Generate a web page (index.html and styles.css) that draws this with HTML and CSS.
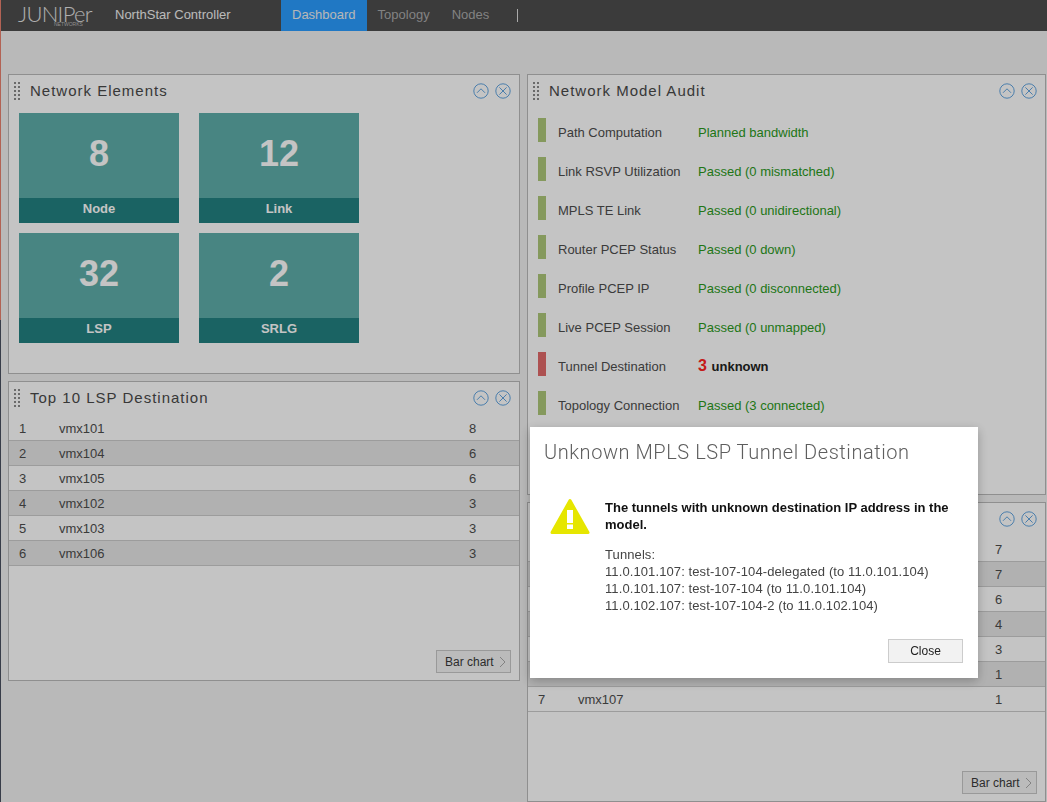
FILE: index.html
```html
<!DOCTYPE html>
<html lang="en">
<head>
  <meta charset="UTF-8">
  <meta name="viewport" content="width=device-width, initial-scale=1.0">
  <title>NorthStar Controller</title>
  <link rel="stylesheet" href="styles.css">
</head>
<body>
  <div class="topbar">
    <div class="logo">
      <span class="logo-word">JUNIPer</span>
      <span class="logo-sub">NETWORKS</span>
    </div>
    <div class="product">NorthStar Controller</div>
    <a class="tab active">Dashboard</a>
    <a class="tab">Topology</a>
    <a class="tab">Nodes</a>
    <span class="tab-sep"></span>
  </div>

  <div class="dashboard">
    <div class="column">
      <section class="panel panel-short">
        <div class="panel-head">
          <span class="grip"></span>
          <h3>Network Elements</h3>
          <svg class="head-icon" viewBox="0 0 16 16"><circle cx="8" cy="8" r="7.2"/><path d="M4 9.8 8 5.8 12 9.8"/></svg>
          <svg class="head-icon" viewBox="0 0 16 16"><circle cx="8" cy="8" r="7.2"/><path d="M4.4 4.4 11.6 11.6M11.6 4.4 4.4 11.6"/></svg>
        </div>
        <div class="tiles">
          <div class="tile"><div class="tile-num">8</div><div class="tile-label">Node</div></div>
          <div class="tile"><div class="tile-num">12</div><div class="tile-label">Link</div></div>
          <div class="tile"><div class="tile-num">32</div><div class="tile-label">LSP</div></div>
          <div class="tile"><div class="tile-num">2</div><div class="tile-label">SRLG</div></div>
        </div>
      </section>

      <section class="panel panel-short">
        <div class="panel-head">
          <span class="grip"></span>
          <h3>Top 10 LSP Destination</h3>
          <svg class="head-icon" viewBox="0 0 16 16"><circle cx="8" cy="8" r="7.2"/><path d="M4 9.8 8 5.8 12 9.8"/></svg>
          <svg class="head-icon" viewBox="0 0 16 16"><circle cx="8" cy="8" r="7.2"/><path d="M4.4 4.4 11.6 11.6M11.6 4.4 4.4 11.6"/></svg>
        </div>
        <div class="rows">
          <div class="row"><span>1</span><span>vmx101</span><span>8</span></div>
          <div class="row shade"><span>2</span><span>vmx104</span><span>6</span></div>
          <div class="row"><span>3</span><span>vmx105</span><span>6</span></div>
          <div class="row shade"><span>4</span><span>vmx102</span><span>3</span></div>
          <div class="row"><span>5</span><span>vmx103</span><span>3</span></div>
          <div class="row shade"><span>6</span><span>vmx106</span><span>3</span></div>
        </div>
        <div class="panel-foot">
          <button class="chart-btn">Bar chart <svg viewBox="0 0 7 12"><path d="M1 1 6 6 1 11"/></svg></button>
        </div>
      </section>
    </div>

    <div class="column">
      <section class="panel panel-audit">
        <div class="panel-head">
          <span class="grip"></span>
          <h3>Network Model Audit</h3>
          <svg class="head-icon" viewBox="0 0 16 16"><circle cx="8" cy="8" r="7.2"/><path d="M4 9.8 8 5.8 12 9.8"/></svg>
          <svg class="head-icon" viewBox="0 0 16 16"><circle cx="8" cy="8" r="7.2"/><path d="M4.4 4.4 11.6 11.6M11.6 4.4 4.4 11.6"/></svg>
        </div>
        <div class="audit">
          <div class="audit-row"><i class="flag"></i><span class="audit-name">Path Computation</span><span class="ok">Planned bandwidth</span></div>
          <div class="audit-row"><i class="flag"></i><span class="audit-name">Link RSVP Utilization</span><span class="ok">Passed (0 mismatched)</span></div>
          <div class="audit-row"><i class="flag"></i><span class="audit-name">MPLS TE Link</span><span class="ok">Passed (0 unidirectional)</span></div>
          <div class="audit-row"><i class="flag"></i><span class="audit-name">Router PCEP Status</span><span class="ok">Passed (0 down)</span></div>
          <div class="audit-row"><i class="flag"></i><span class="audit-name">Profile PCEP IP</span><span class="ok">Passed (0 disconnected)</span></div>
          <div class="audit-row"><i class="flag"></i><span class="audit-name">Live PCEP Session</span><span class="ok">Passed (0 unmapped)</span></div>
          <div class="audit-row"><i class="flag bad"></i><span class="audit-name">Tunnel Destination</span><span class="fail"><b>3</b> unknown</span></div>
          <div class="audit-row"><i class="flag"></i><span class="audit-name">Topology Connection</span><span class="ok">Passed (3 connected)</span></div>
        </div>
      </section>

      <section class="panel panel-source">
        <div class="panel-head">
          <span class="grip"></span>
          <h3></h3>
          <svg class="head-icon" viewBox="0 0 16 16"><circle cx="8" cy="8" r="7.2"/><path d="M4 9.8 8 5.8 12 9.8"/></svg>
          <svg class="head-icon" viewBox="0 0 16 16"><circle cx="8" cy="8" r="7.2"/><path d="M4.4 4.4 11.6 11.6M11.6 4.4 4.4 11.6"/></svg>
        </div>
        <!-- first six names sit behind the dialog -->
        <div class="rows">
          <div class="row"><span></span><span></span><span>7</span></div>
          <div class="row shade"><span></span><span></span><span>7</span></div>
          <div class="row"><span></span><span></span><span>6</span></div>
          <div class="row shade"><span></span><span></span><span>4</span></div>
          <div class="row"><span></span><span></span><span>3</span></div>
          <div class="row shade"><span></span><span></span><span>1</span></div>
          <div class="row"><span>7</span><span>vmx107</span><span>1</span></div>
        </div>
        <div class="panel-foot">
          <button class="chart-btn">Bar chart <svg viewBox="0 0 7 12"><path d="M1 1 6 6 1 11"/></svg></button>
        </div>
      </section>
    </div>
  </div>

  <div class="overlay"></div>

  <div class="modal">
    <h2>Unknown MPLS LSP Tunnel Destination</h2>
    <div class="modal-body">
      <svg class="warn" viewBox="0 0 40 37">
        <path class="warn-bg" d="M20 2.5 38 34.5H2Z"/>
        <rect class="warn-mark" x="17" y="12" width="6" height="13"/>
        <rect class="warn-mark" x="17" y="26.5" width="6" height="4.5"/>
      </svg>
      <div class="modal-text">
        <p class="modal-lead">The tunnels with unknown destination IP address in the model.</p>
        <p class="modal-list">Tunnels:<br>
        11.0.101.107: test-107-104-delegated (to 11.0.101.104)<br>
        11.0.101.107: test-107-104 (to 11.0.101.104)<br>
        11.0.102.107: test-107-104-2 (to 11.0.102.104)</p>
      </div>
    </div>
    <div class="modal-foot">
      <button class="close-btn">Close</button>
    </div>
  </div>
</body>
</html>
```

FILE: styles.css
```css
html, body {
  height: 100%;
}
body {
  margin: 0;
  padding-left: 1px;
  box-sizing: border-box;
  overflow: hidden;
  font-family: "Liberation Sans", Arial, sans-serif;
  font-size: 13px;
  color: #4d4d4d;
  background: linear-gradient(#e8806e 0, #e8806e 320px, #4a5060 320px) 0 0 / 1px 100% no-repeat, #f1f1f1;
}

/* top bar */
.topbar {
  display: flex;
  align-items: center;
  height: 31px;
  background-color: #4d4d4d;
  color: #fff;
}
.logo {
  position: relative;
  width: 114px;
  height: 31px;
  flex: none;
}
.logo-word {
  position: absolute;
  left: 17px;
  top: 5px;
  font-family: "Lato", sans-serif;
  font-weight: 300;
  font-size: 22px;
  line-height: 17px;
  letter-spacing: -0.7px;
  color: #e4e4e4;
}
.logo-sub {
  position: absolute;
  left: 53px;
  top: 22px;
  font-size: 5px;
  line-height: 5px;
  color: #bbb;
}
.product {
  width: 166px;
  flex: none;
  padding-bottom: 2px;
  font-size: 13px;
  color: #f2f2f2;
}
.tab {
  height: 31px;
  padding: 0 11px;
  line-height: 29px;
  font-size: 13px;
  color: #aaa;
}
.tab.active {
  background-color: #2a9dff;
  color: #eee;
}
.tab-sep {
  width: 1px;
  height: 13px;
  margin-left: 17px;
  background-color: #ddd;
}

/* panels */
.dashboard {
  display: grid;
  grid-template-columns: 512px 519px;
  gap: 7px;
  padding: 43px 0 0 7px;
}
.column {
  display: flex;
  flex-direction: column;
  gap: 7px;
}
.panel {
  display: flex;
  flex-direction: column;
  box-sizing: border-box;
  border: 1px solid #bababa;
  background-color: #fff;
}
.panel-short {
  height: 300px;
}
.panel-audit {
  height: 421px;
}
.panel-source {
  height: 300px;
}
.panel-head {
  display: flex;
  align-items: center;
  gap: 6px;
  height: 31px;
  flex: none;
  padding: 0 8px 0 5px;
}
.panel-head h3 {
  flex: 1;
  margin: 0 0 0 4px;
  font-size: 15px;
  font-weight: normal;
  letter-spacing: 1px;
  color: #4a4a4a;
}
.grip {
  width: 2px;
  height: 18px;
  border-left: 2px dotted #8a8a8a;
  border-right: 2px dotted #8a8a8a;
}
.head-icon {
  width: 16px;
  height: 16px;
  fill: none;
  stroke: #62a5e0;
  stroke-width: 1;
}

/* tiles */
.tiles {
  display: grid;
  grid-template-columns: 160px 160px;
  gap: 10px 20px;
  padding: 7px 10px;
}
.tile {
  display: flex;
  flex-direction: column;
  height: 110px;
  background-color: #5eaea9;
  color: #fff;
  text-align: center;
  font-weight: bold;
}
.tile-num {
  flex: 1;
  font-size: 36px;
  line-height: 81px;
}
.tile-label {
  height: 25px;
  line-height: 21px;
  background-color: #238181;
  font-size: 13px;
}

/* tables */
.rows {
  flex: none;
  margin-top: 3px;
}
.row {
  display: grid;
  grid-template-columns: 40px 1fr 50px;
  height: 25px;
  box-sizing: border-box;
  padding-left: 10px;
  border-bottom: 1px solid #cbcbcb;
  line-height: 26px;
}
.shade {
  background-color: #e7e7e7;
}
.panel-foot {
  display: flex;
  justify-content: flex-end;
  margin-top: auto;
  padding: 0 8px 7px;
}
.chart-btn {
  display: flex;
  align-items: center;
  gap: 5px;
  height: 23px;
  width: 75px;
  padding: 0 0 0 8px;
  border: 1px solid #c8c8c8;
  background-color: #f4f4f4;
  font: 12px "Liberation Sans", Arial, sans-serif;
  color: #3a3a3a;
}
.chart-btn svg {
  width: 7px;
  height: 12px;
  fill: none;
  stroke: #aaa;
  stroke-width: 1;
}

/* audit list */
.audit {
  padding: 12px 10px 0;
}
.audit-row {
  display: flex;
  align-items: center;
  height: 24px;
  margin-bottom: 15px;
}
.audit-row span {
  padding-top: 4px;
}
.flag {
  width: 8px;
  height: 24px;
  margin-right: 12px;
  background-color: #aec87a;
}
.flag.bad {
  background-color: #e26a6a;
}
.audit-name {
  width: 140px;
}
.ok {
  color: #2b9a1c;
}
.fail {
  font-weight: bold;
  color: #222;
}
.fail b {
  font-size: 16px;
  color: #ff2222;
  margin-right: 1px;
}

/* dimmed page and dialog */
.overlay {
  position: fixed;
  top: 0;
  right: 0;
  bottom: 0;
  left: 0;
  background-color: rgba(0, 0, 0, 0.23);
}
.modal {
  position: fixed;
  left: 530px;
  top: 427px;
  width: 448px;
  height: 251px;
  display: flex;
  flex-direction: column;
  box-sizing: border-box;
  padding: 13px 15px 15px 14px;
  background-color: #fff;
  box-shadow: 0 3px 10px rgba(0, 0, 0, 0.25);
}
.modal h2 {
  margin: 0;
  font-family: "Roboto", sans-serif;
  font-weight: 300;
  font-size: 20px;
  line-height: 24px;
  letter-spacing: 0.55px;
  color: #5e5e5e;
}
.modal-body {
  display: flex;
  gap: 15px;
  margin-top: 35px;
  padding-left: 6px;
}
.warn {
  width: 40px;
  height: 37px;
  flex: none;
  margin-top: -1px;
}
.warn-bg {
  fill: #e6e600;
  stroke: #e6e600;
  stroke-width: 3;
  stroke-linejoin: round;
}
.warn-mark {
  fill: #fff;
}
.modal-text p {
  margin: 0;
  font-size: 13px;
  line-height: 17px;
}
.modal-text .modal-lead {
  margin-bottom: 13px;
  font-weight: bold;
  color: #111;
}
.modal-text .modal-list {
  letter-spacing: 0.1px;
  color: #444;
}
.modal-foot {
  display: flex;
  justify-content: flex-end;
  margin-top: auto;
}
.close-btn {
  width: 75px;
  height: 24px;
  border: 1px solid #ccc;
  background-color: #f2f2f2;
  font: 12px "Liberation Sans", Arial, sans-serif;
  color: #222;
}
```
